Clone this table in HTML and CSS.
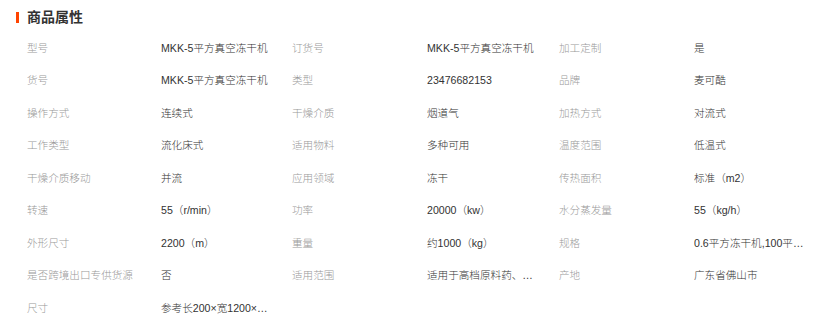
FILE: index.html
```html
<!DOCTYPE html>
<html lang="zh-CN">
<head>
<meta charset="utf-8">
<title>商品属性</title>
<link rel="stylesheet" href="styles.css">
</head>
<body>
<section class="attrs">
  <h2 class="attrs-title">商品属性</h2>
  <div class="attrs-grid">
    <span class="label">型号</span><span class="value">MKK-5平方真空冻干机</span>
    <span class="label">订货号</span><span class="value">MKK-5平方真空冻干机</span>
    <span class="label">加工定制</span><span class="value">是</span>

    <span class="label">货号</span><span class="value">MKK-5平方真空冻干机</span>
    <span class="label">类型</span><span class="value">23476682153</span>
    <span class="label">品牌</span><span class="value">麦可酷</span>

    <span class="label">操作方式</span><span class="value">连续式</span>
    <span class="label">干燥介质</span><span class="value">烟道气</span>
    <span class="label">加热方式</span><span class="value">对流式</span>

    <span class="label">工作类型</span><span class="value">流化床式</span>
    <span class="label">适用物料</span><span class="value">多种可用</span>
    <span class="label">温度范围</span><span class="value">低温式</span>

    <span class="label">干燥介质移动</span><span class="value">并流</span>
    <span class="label">应用领域</span><span class="value">冻干</span>
    <span class="label">传热面积</span><span class="value">标准（m2）</span>

    <span class="label">转速</span><span class="value">55（r/min）</span>
    <span class="label">功率</span><span class="value">20000（kw）</span>
    <span class="label">水分蒸发量</span><span class="value">55（kg/h）</span>

    <span class="label">外形尺寸</span><span class="value">2200（m）</span>
    <span class="label">重量</span><span class="value">约1000（kg）</span>
    <span class="label">规格</span><span class="value">0.6平方冻干机,100平方冻干机</span>

    <span class="label">是否跨境出口专供货源</span><span class="value">否</span>
    <span class="label">适用范围</span><span class="value">适用于高档原料药、生物制品</span>
    <span class="label">产地</span><span class="value">广东省佛山市</span>

    <span class="label">尺寸</span><span class="value">参考长200×宽1200×高1500</span>
  </div>
</section>
</body>
</html>
```
FILE: styles.css
```css
html, body {
  margin: 0;
  padding: 0;
  background: #fff;
}
body {
  font-family: "Liberation Sans", "Noto Sans CJK SC", sans-serif;
  color: #333;
}
.attrs {
  padding: 7px 0 0 16px;
}
.attrs-title {
  margin: 0;
  display: flex;
  align-items: center;
  gap: 8px;
  font-size: 14px;
  font-weight: bold;
  line-height: 20px;
  color: #333;
}
.attrs-title::before {
  content: "";
  width: 3px;
  height: 11px;
  background: #ff4400;
}
.attrs-grid {
  display: grid;
  grid-template-columns: 134px 131px 135px 132px 135px 132px;
  grid-auto-rows: 32.5px;
  align-items: center;
  margin: 4px 0 0 11px;
  font-size: 10.6px;
  font-weight: 300;
}
.label {
  color: #999;
  white-space: nowrap;
}
.value {
  color: #333;
  max-width: 110px;
  white-space: nowrap;
  overflow: hidden;
  text-overflow: ellipsis;
}
```
